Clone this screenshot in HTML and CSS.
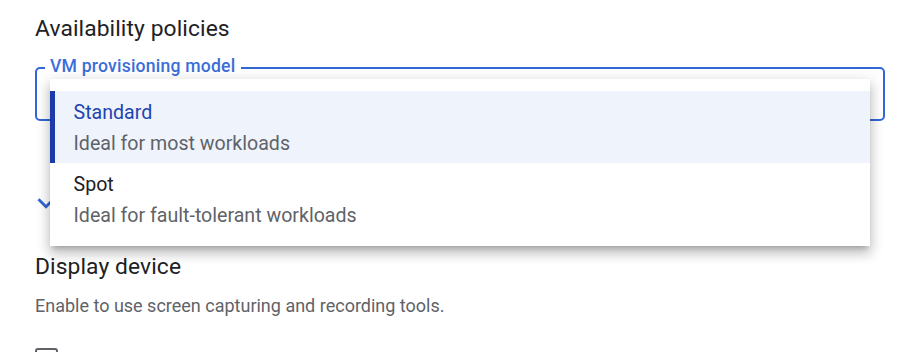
FILE: index.html
```html
<!DOCTYPE html>
<html lang="en">
<head>
  <meta charset="UTF-8">
  <meta name="viewport" content="width=device-width, initial-scale=1.0">
  <title>Availability policies</title>
  <link rel="stylesheet" href="styles.css">
</head>
<body>
  <main class="page">
    <h2 class="section-title">Availability policies</h2>

    <div class="field">
      <span class="field-label">VM provisioning model</span>

      <ul class="menu" role="listbox">
        <li class="menu-item selected" role="option">
          <span class="item-title">Standard</span>
          <span class="item-desc">Ideal for most workloads</span>
        </li>
        <li class="menu-item" role="option">
          <span class="item-title">Spot</span>
          <span class="item-desc">Ideal for fault-tolerant workloads</span>
        </li>
      </ul>
    </div>

    <div class="expander">
      <svg class="chevron" width="34" height="34" viewBox="0 0 24 24">
        <path d="M16.59 8.59L12 13.17 7.41 8.59 6 10l6 6 6-6z"/>
      </svg>
    </div>

    <h2 class="section-title section-title--spaced">Display device</h2>
    <p class="hint">Enable to use screen capturing and recording tools.</p>

    <label class="checkbox">
      <span class="checkbox-box"></span>
    </label>
  </main>
</body>
</html>
```

FILE: styles.css
```css
* {
  margin: 0;
  padding: 0;
  box-sizing: border-box;
}

html, body {
  height: 100%;
  overflow: hidden;
}

body {
  font-family: Roboto, "Liberation Sans", Arial, sans-serif;
  background: #ffffff;
  color: #202124;
}

.page {
  padding: 15px 28px 0 35px;
}

.section-title {
  font-size: 22.8px;
  font-weight: 400;
  letter-spacing: 0.1px;
  line-height: 28px;
  color: #202124;
}

.section-title--spaced {
  margin-top: 33.3px;
}

/* outlined select */
.field {
  position: relative;
  margin-top: 24px;
  height: 54px;
  border: 2.5px solid #3367d6;
  border-radius: 5px;
}

.field-label {
  position: absolute;
  top: -12.6px;
  left: 8px;
  padding: 0 6px 0 5px;
  background: #ffffff;
  font-size: 17.6px;
  font-weight: 500;
  letter-spacing: 0.2px;
  line-height: 20px;
  color: #3b6ed8;
}

/* open dropdown panel */
.menu {
  position: absolute;
  top: 9.5px;
  left: 12.5px;
  width: 820px;
  list-style: none;
  padding: 12px 0 11px;
  background: #ffffff;
  box-shadow: 0 5px 5px -3px rgba(0, 0, 0, 0.2),
              0 8px 10px 1px rgba(0, 0, 0, 0.14),
              0 3px 14px 2px rgba(0, 0, 0, 0.12);
  z-index: 2;
}

.menu-item {
  display: flex;
  flex-direction: column;
  height: 72px;
  padding: 7.3px 24px 0 19px;
  border-left: 5px solid transparent;
}

.menu-item.selected {
  background: #eef3fc;
  border-left-color: #1d3ba8;
}

.item-title {
  font-size: 19.6px;
  line-height: 29px;
  color: #202124;
}

.menu-item.selected .item-title {
  color: #1f44b0;
}

.item-desc {
  margin-top: 2px;
  font-size: 19.6px;
  line-height: 29px;
  color: #5f6368;
}

.expander {
  margin-top: 64.5px;
  margin-left: -6.4px;
  height: 34px;
}

.chevron {
  display: block;
  fill: #3367d6;
}

.hint {
  margin-top: 13px;
  font-size: 18px;
  line-height: 24px;
  color: #5f6368;
}

.checkbox {
  display: block;
  margin-top: 30.25px;
}

.checkbox-box {
  display: block;
  width: 23px;
  height: 23px;
  border: 2.5px solid #5f6368;
  border-radius: 3px;
}
```
